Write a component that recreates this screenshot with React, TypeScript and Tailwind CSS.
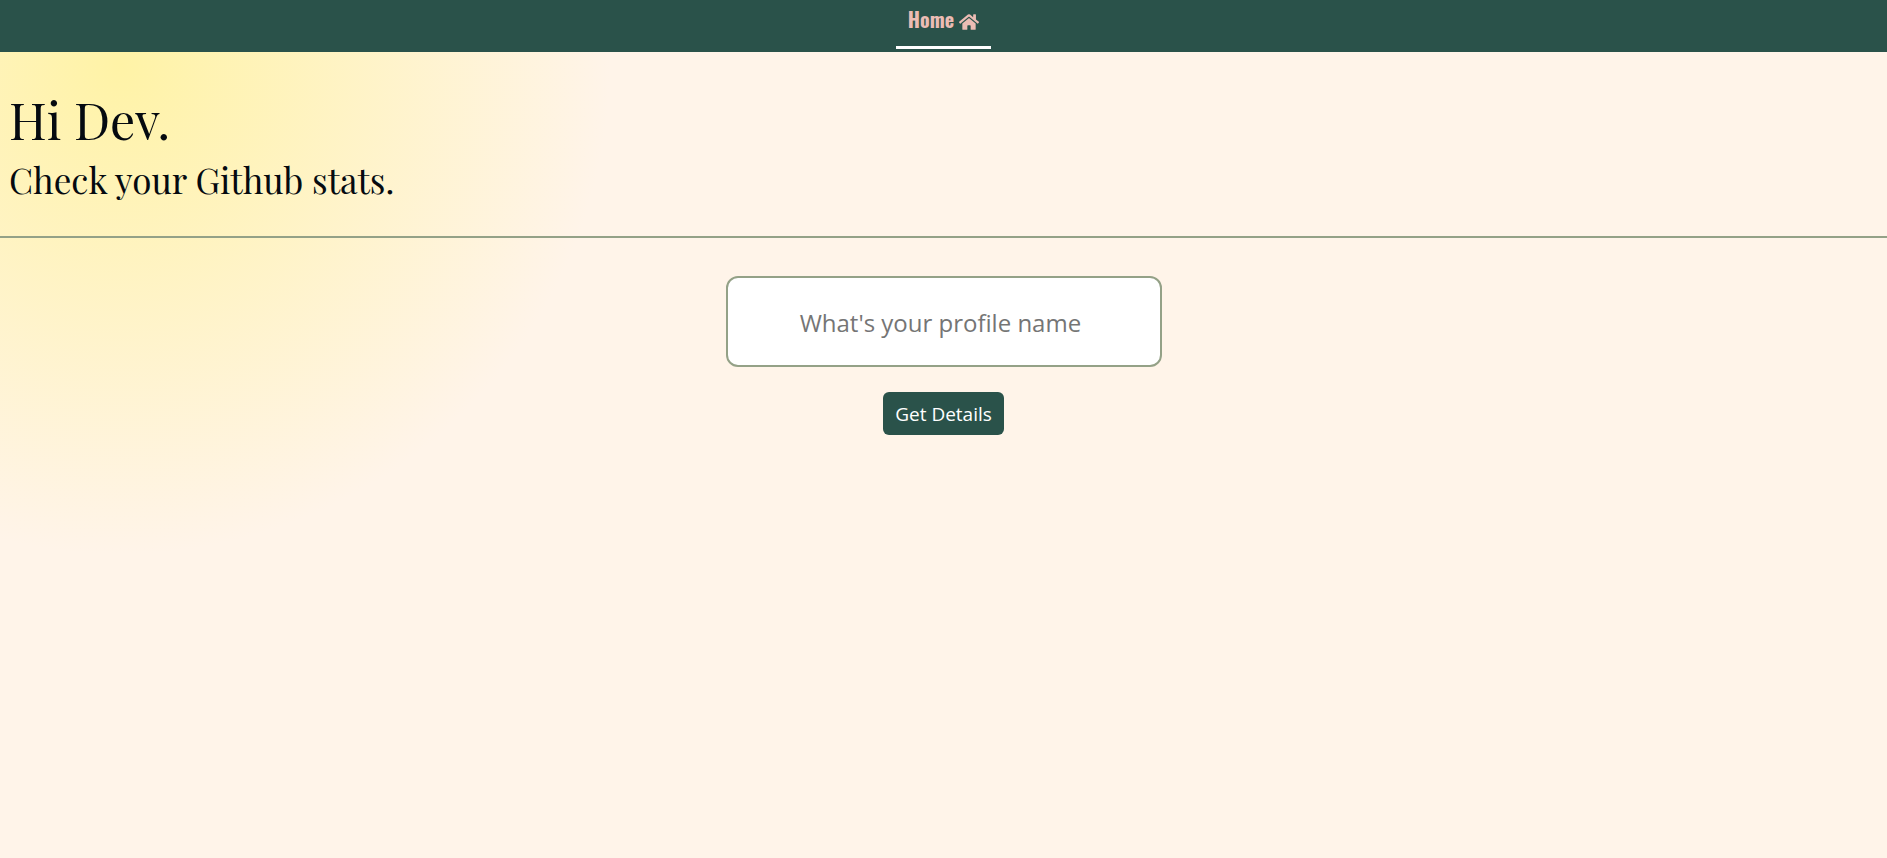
import { FaHome } from "react-icons/fa";

export default function App() {
  return (
    <div className="min-h-screen bg-[#fff4e9] bg-[radial-gradient(circle_at_120px_64px,#fff3a6_0px,#fff4e9_490px)] font-['Segoe_UI','Open_Sans','Noto_Sans',sans-serif] text-[#050a10]">
      <nav className="flex h-13 justify-center bg-[#2a524a]">
        <a
          href="/"
          className="flex h-[49px] items-start gap-[5px] border-b-3 border-white px-3 pt-1 font-['Oswald','Liberation_Sans_Narrow','Open_Sans_Condensed',sans-serif] text-[20px] leading-[30px] font-bold text-[#ecbcb4]"
        >
          Home
          <FaHome className="mt-2 size-5" aria-hidden="true" />
        </a>
      </nav>
      <header className="border-b-2 border-[#94a187] px-[9px] pt-[35px] pb-8 font-['Playfair_Display','Liberation_Serif',serif]">
        <h1 className="text-[50px] leading-[66px]">Hi Dev.</h1>
        <h2 className="pt-[3px] text-[35px] leading-[48px]">Check your Github stats.</h2>
      </header>
      <main>
        <form className="flex flex-col items-center gap-[25px] pt-[38px]" onSubmit={(e) => e.preventDefault()}>
          <input
            type="text"
            aria-label="Profile name"
            placeholder="What's your profile name "
            className="h-[91px] w-[436px] max-w-full rounded-xl border-2 border-[#94a187] bg-white px-5 pt-0.5 text-center text-[24px] outline-none placeholder:text-[#757575]"
          />
          <button type="submit" className="h-[43px] rounded-md bg-[#2a524a] px-3 pt-0.5 text-[19px] text-white">
            Get Details
          </button>
        </form>
      </main>
    </div>
  );
}
